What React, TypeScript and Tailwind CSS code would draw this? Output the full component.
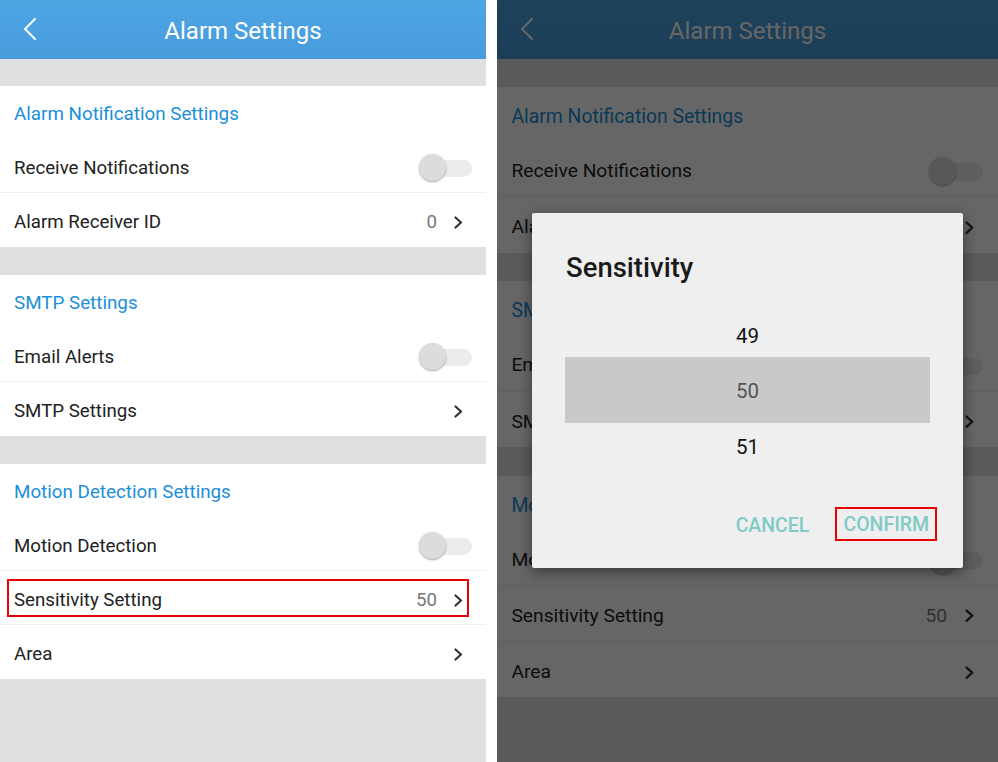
import React from "react";

const Chevron = () => (
  <svg width="9" height="13" viewBox="0 0 9 13" className="shrink-0">
    <path d="M1.5 1.5 L7 6.5 L1.5 11.5" fill="none" stroke="#333" strokeWidth="2.2" strokeLinecap="round" strokeLinejoin="round" />
  </svg>
);

const Toggle = () => (
  <div className="relative w-[53px] h-[28px]">
    <div className="absolute right-0 top-[6px] w-[42px] h-[17px] rounded-full bg-[#ececec]" />
    <div className="absolute left-0 top-0 w-[27px] h-[27px] rounded-full bg-[#dcdcdc] shadow-[0_1px_2px_rgba(0,0,0,0.35)]" />
  </div>
);

const SectionHeader = ({ text }: { text: string }) => (
  <div className="h-[53px] pt-[4px] flex items-center px-[14px] text-[18.8px] text-[#1b8fd9]">{text}</div>
);

const Row = ({
  label,
  toggle,
  value,
  chevron,
  last,
  highlight,
}: {
  label: string;
  toggle?: boolean;
  value?: string;
  chevron?: boolean;
  last?: boolean;
  highlight?: boolean;
}) => (
  <div className={`relative h-[54px] pt-[5px] flex items-center px-[14px] ${last ? "" : "border-b border-[#efefef]"}`}>
    <div className="flex-1 text-[18.7px] text-[#222]">{label}</div>
    {toggle && <Toggle />}
    {value && <div className="text-[18.7px] text-[#777] mr-[17px]">{value}</div>}
    {chevron && (
      <div className="mr-[9px] flex items-center">
        <Chevron />
      </div>
    )}
    {highlight && (
      <div className="absolute left-[7px] right-[17px] top-[8px] bottom-[7px] border-2 border-[#e6000a]" />
    )}
  </div>
);

const Content = ({ highlight }: { highlight?: boolean }) => (
  <div className="flex flex-col">
    <div className="h-[27px]" />
    <div className="bg-white">
      <SectionHeader text="Alarm Notification Settings" />
      <Row label="Receive Notifications" toggle />
      <Row label="Alarm Receiver ID" value="0" chevron last />
    </div>
    <div className="h-[28px]" />
    <div className="bg-white">
      <SectionHeader text="SMTP Settings" />
      <Row label="Email Alerts" toggle />
      <Row label="SMTP Settings" chevron last />
    </div>
    <div className="h-[28px]" />
    <div className="bg-white">
      <SectionHeader text="Motion Detection Settings" />
      <Row label="Motion Detection" toggle />
      <Row label="Sensitivity Setting" value="50" chevron highlight={highlight} />
      <Row label="Area" chevron last />
    </div>
  </div>
);

const Header = () => (
  <div className="relative h-[59px] shrink-0 pt-[2px] flex items-center justify-center bg-gradient-to-b from-[#4ea5e4] to-[#479cdc]">
    <svg width="14" height="22" viewBox="0 0 14 22" className="absolute left-[23px] top-[18px]">
      <path d="M12 1 L2 11 L12 21" fill="none" stroke="#fff" strokeWidth="2" strokeLinecap="round" strokeLinejoin="round" />
    </svg>
    <div className="text-[24px] text-white">Alarm Settings</div>
  </div>
);

export default function App() {
  return (
    <div
      className="w-[998px] h-[762px] flex bg-white overflow-hidden"
      style={{ fontFamily: "Roboto, 'Noto Sans', sans-serif" }}
    >
      <div className="w-[486px] h-full flex flex-col bg-[#e0e0e0] overflow-hidden">
        <Header />
        <Content highlight />
      </div>
      <div className="w-[11px] shrink-0 bg-white" />
      <div className="relative w-[501px] h-full flex flex-col bg-[#e0e0e0] overflow-hidden">
        <Header />
        <div className="[zoom:1.03] w-[486px]">
          <Content />
        </div>
        <div className="absolute inset-0 bg-black/60" />
        <div className="absolute left-[35px] top-[213px] w-[431px] h-[355px] rounded-[2px] bg-[#efefef] shadow-[0_4px_14px_rgba(0,0,0,0.45)] flex flex-col">
          <div className="mt-[39px] pl-[34px] text-[27.5px] font-medium text-[#1a1a1a] leading-[32px]">Sensitivity</div>
          <div className="mt-[29px] mx-[33px] flex flex-col">
            <div className="h-[44px] pt-[2px] flex items-center justify-center text-[20.5px] text-[#111]">49</div>
            <div className="h-[66px] pt-[2px] flex items-center justify-center bg-[#c9c9c9] text-[20.5px] text-[#555]">50</div>
            <div className="h-[48px] flex items-center justify-center text-[20.5px] text-[#111]">51</div>
          </div>
          <div className="mt-[36px] flex justify-end items-center pr-[26px]">
            <div className="mr-[26px] pt-[3px] text-[19.5px] font-medium text-[#80cbc4]">CANCEL</div>
            <div className="h-[34px] pt-[2px] px-[6px] border-2 border-[#e6000a] flex items-center text-[19.5px] font-medium text-[#80cbc4]">
              CONFIRM
            </div>
          </div>
        </div>
      </div>
    </div>
  );
}
